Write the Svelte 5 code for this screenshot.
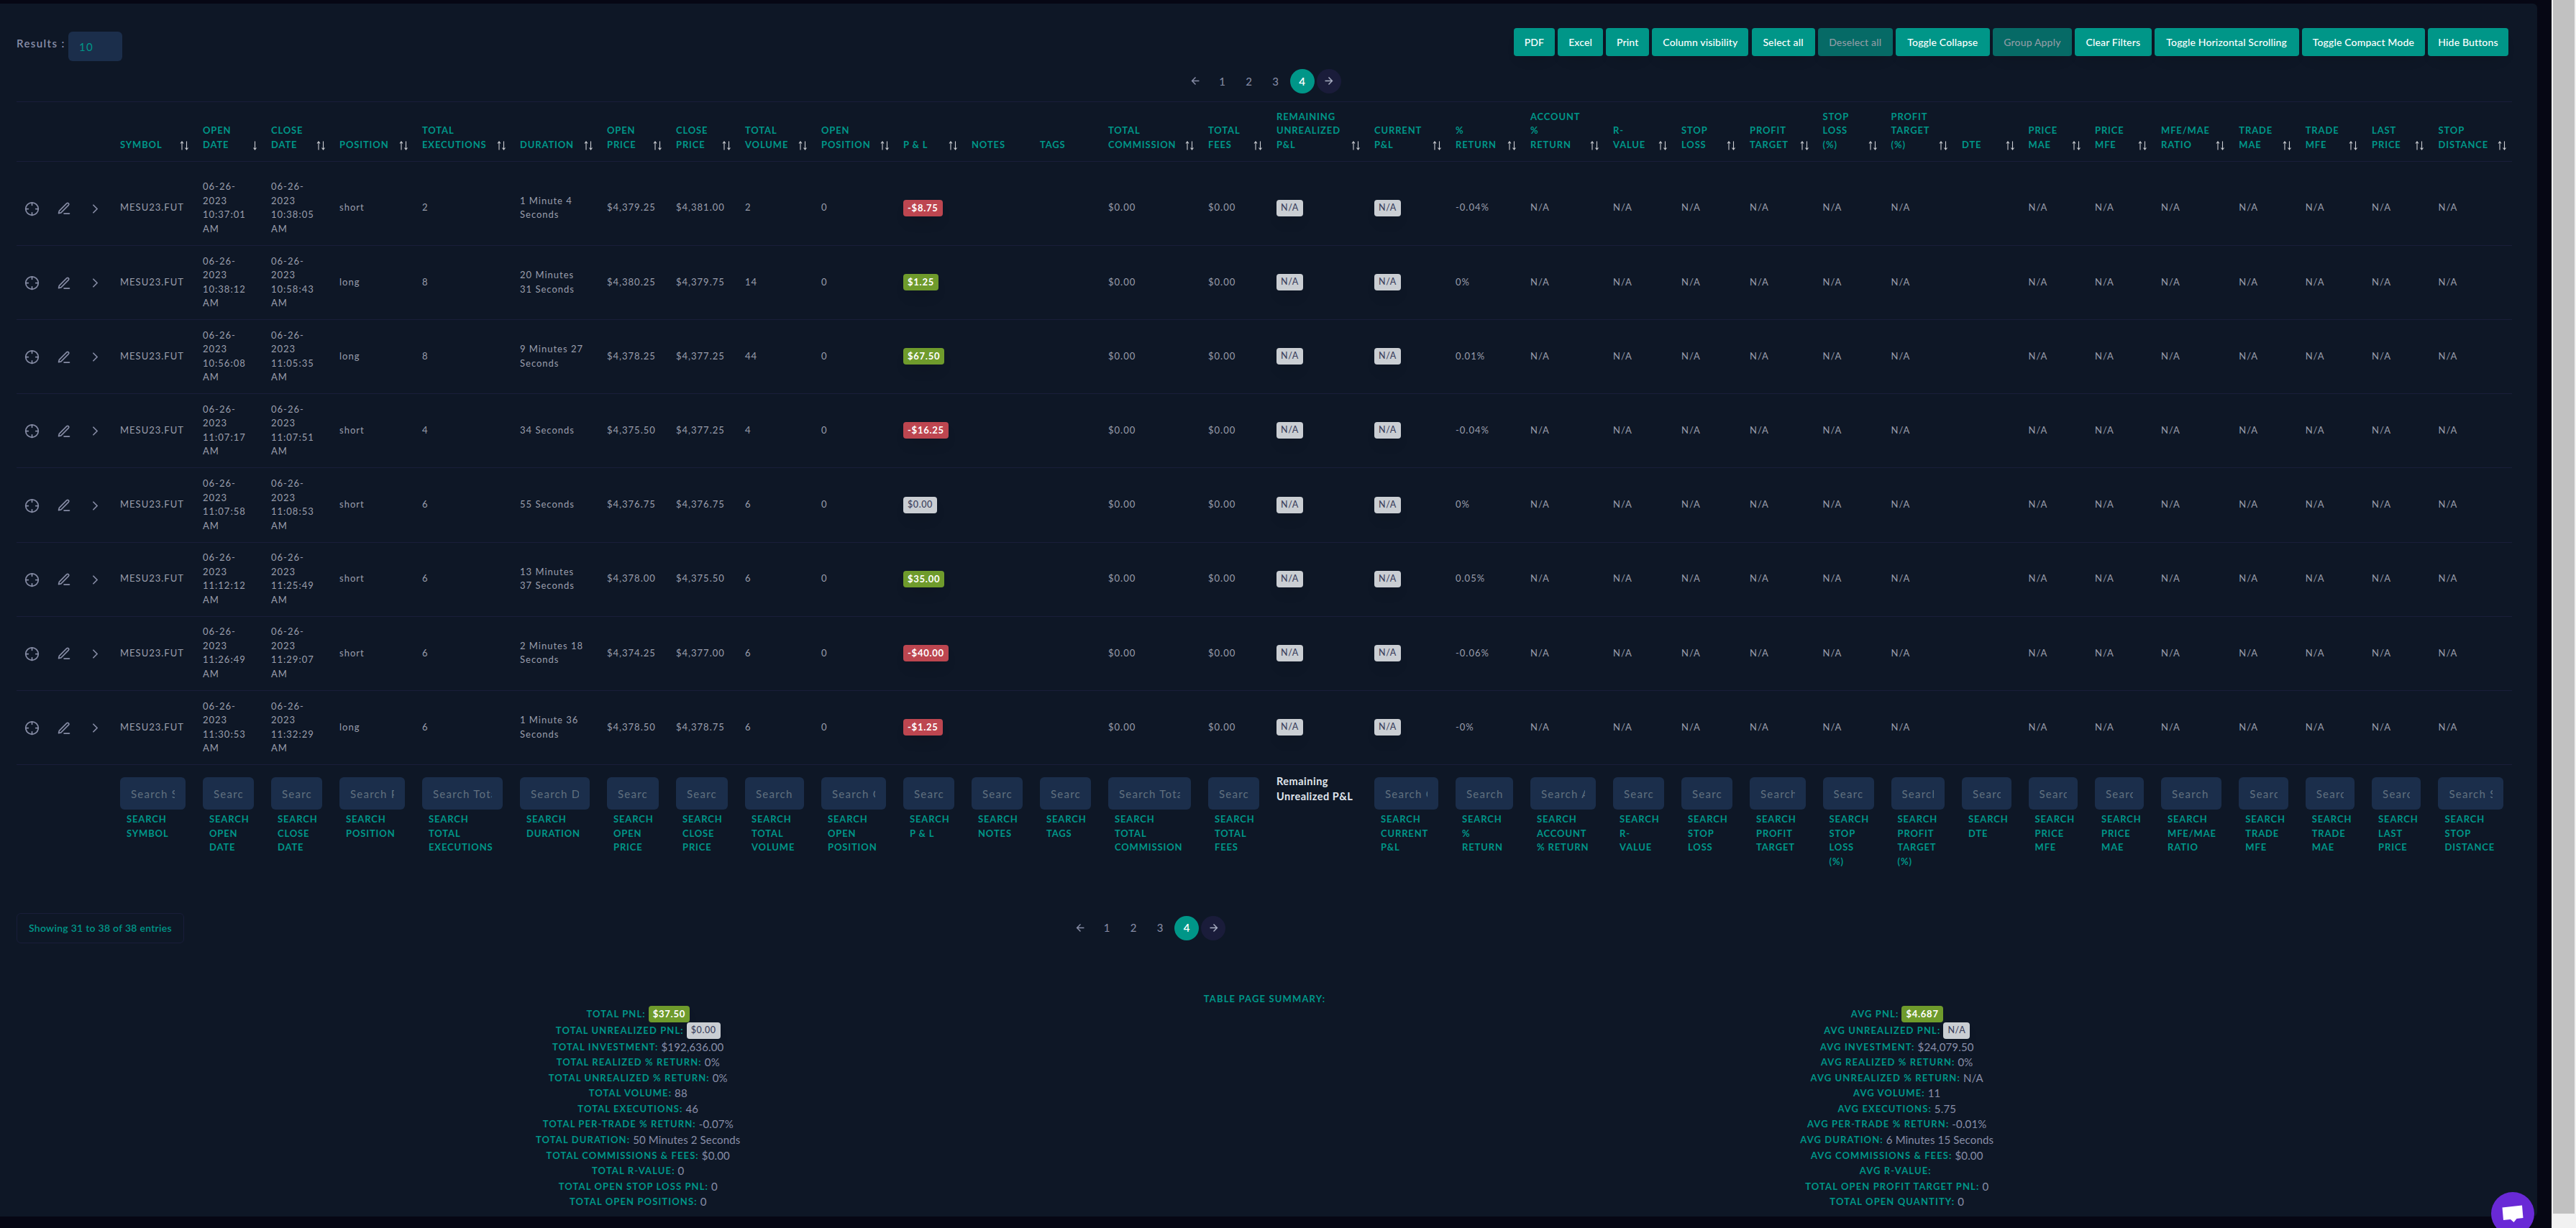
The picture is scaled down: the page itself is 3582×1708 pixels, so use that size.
<script lang="ts">
  type Column = {
    title: string;
    width: number;
    sort?: 'both' | 'asc';
    placeholder?: string;
    search?: string;
  };

  type Trade = {
    open: string;
    close: string;
    position: string;
    executions: number;
    duration: string;
    openPrice: string;
    closePrice: string;
    volume: number;
    pnl: string;
    ret: string;
  };

  const buttons = [
    { label: 'PDF', width: 57 },
    { label: 'Excel', width: 63 },
    { label: 'Print', width: 60 },
    { label: 'Column visibility', width: 134 },
    { label: 'Select all', width: 88 },
    { label: 'Deselect all', width: 104, disabled: true },
    { label: 'Toggle Collapse', width: 131 },
    { label: 'Group Apply', width: 110, disabled: true },
    { label: 'Clear Filters', width: 106.5 },
    { label: 'Toggle Horizontal Scrolling', width: 201 },
    { label: 'Toggle Compact Mode', width: 171 },
    { label: 'Hide Buttons', width: 112 },
  ];

  const columns: Column[] = [
    { title: 'Symbol', width: 115, sort: 'both', placeholder: 'Search Symbol', search: 'Search\nSymbol' },
    { title: 'Open\nDate', width: 95, sort: 'asc', placeholder: 'Search Open Date', search: 'Search\nOpen\nDate' },
    { title: 'Close\nDate', width: 95, sort: 'both', placeholder: 'Search Close Date', search: 'Search\nClose\nDate' },
    { title: 'Position', width: 115, sort: 'both', placeholder: 'Search Position', search: 'Search\nPosition' },
    { title: 'Total\nExecutions', width: 136, sort: 'both', placeholder: 'Search Total Executions', search: 'Search\nTotal\nExecutions' },
    { title: 'Duration', width: 121, sort: 'both', placeholder: 'Search Duration', search: 'Search\nDuration' },
    { title: 'Open\nPrice', width: 96, sort: 'both', placeholder: 'Search Open Price', search: 'Search\nOpen\nPrice' },
    { title: 'Close\nPrice', width: 96, sort: 'both', placeholder: 'Search Close Price', search: 'Search\nClose\nPrice' },
    { title: 'Total\nVolume', width: 106, sort: 'both', placeholder: 'Search Total Volume', search: 'Search\nTotal\nVolume' },
    { title: 'Open\nPosition', width: 114, sort: 'both', placeholder: 'Search Open Position', search: 'Search\nOpen\nPosition' },
    { title: 'P & L', width: 95, sort: 'both', placeholder: 'Search P & L', search: 'Search\nP & L' },
    { title: 'Notes', width: 95, placeholder: 'Search Notes', search: 'Search\nNotes' },
    { title: 'Tags', width: 95, placeholder: 'Search Tags', search: 'Search\nTags' },
    { title: 'Total\nCommission', width: 139, sort: 'both', placeholder: 'Search Total Commission', search: 'Search\nTotal\nCommission' },
    { title: 'Total\nFees', width: 95, sort: 'both', placeholder: 'Search Total Fees', search: 'Search\nTotal\nFees' },
    { title: 'Remaining\nUnrealized\nP&L', width: 136, sort: 'both' },
    { title: 'Current\nP&L', width: 113, sort: 'both', placeholder: 'Search Current P&L', search: 'Search\nCurrent\nP&L' },
    { title: '%\nReturn', width: 104, sort: 'both', placeholder: 'Search % Return', search: 'Search\n%\nReturn' },
    { title: 'Account\n%\nReturn', width: 115, sort: 'both', placeholder: 'Search Account % Return', search: 'Search\nAccount\n% Return' },
    { title: 'R-\nValue', width: 95, sort: 'both', placeholder: 'Search R-Value', search: 'Search\nR-\nValue' },
    { title: 'Stop\nLoss', width: 95, sort: 'both', placeholder: 'Search Stop Loss', search: 'Search\nStop\nLoss' },
    { title: 'Profit\nTarget', width: 101.5, sort: 'both', placeholder: 'Search Profit Target', search: 'Search\nProfit\nTarget' },
    { title: 'Stop\nLoss\n(%)', width: 95, sort: 'both', placeholder: 'Search Stop Loss (%)', search: 'Search\nStop\nLoss\n(%)' },
    { title: 'Profit\nTarget\n(%)', width: 98.5, sort: 'both', placeholder: 'Search Profit Target (%)', search: 'Search\nProfit\nTarget\n(%)' },
    { title: 'DTE', width: 92.5, sort: 'both', placeholder: 'Search DTE', search: 'Search\nDTE' },
    { title: 'Price\nMAE', width: 92.5, sort: 'both', placeholder: 'Search Price MFE', search: 'Search\nPrice\nMFE' },
    { title: 'Price\nMFE', width: 92, sort: 'both', placeholder: 'Search Price MAE', search: 'Search\nPrice\nMAE' },
    { title: 'MFE/MAE\nRatio', width: 108.3, sort: 'both', placeholder: 'Search MFE/MAE Ratio', search: 'Search\nMFE/MAE\nRatio' },
    { title: 'Trade\nMAE', width: 92.4, sort: 'both', placeholder: 'Search Trade MFE', search: 'Search\nTrade\nMFE' },
    { title: 'Trade\nMFE', width: 92.4, sort: 'both', placeholder: 'Search Trade MAE', search: 'Search\nTrade\nMAE' },
    { title: 'Last\nPrice', width: 92.4, sort: 'both', placeholder: 'Search Last Price', search: 'Search\nLast\nPrice' },
    { title: 'Stop\nDistance', width: 114.5, sort: 'both', placeholder: 'Search Stop Distance', search: 'Search\nStop\nDistance' },
  ];

  const trades: Trade[] = [
    { open: '10:37:01', close: '10:38:05', position: 'short', executions: 2, duration: '1 Minute 4\nSeconds', openPrice: '$4,379.25', closePrice: '$4,381.00', volume: 2, pnl: '-$8.75', ret: '-0.04%' },
    { open: '10:38:12', close: '10:58:43', position: 'long', executions: 8, duration: '20 Minutes\n31 Seconds', openPrice: '$4,380.25', closePrice: '$4,379.75', volume: 14, pnl: '$1.25', ret: '0%' },
    { open: '10:56:08', close: '11:05:35', position: 'long', executions: 8, duration: '9 Minutes 27\nSeconds', openPrice: '$4,378.25', closePrice: '$4,377.25', volume: 44, pnl: '$67.50', ret: '0.01%' },
    { open: '11:07:17', close: '11:07:51', position: 'short', executions: 4, duration: '34 Seconds', openPrice: '$4,375.50', closePrice: '$4,377.25', volume: 4, pnl: '-$16.25', ret: '-0.04%' },
    { open: '11:07:58', close: '11:08:53', position: 'short', executions: 6, duration: '55 Seconds', openPrice: '$4,376.75', closePrice: '$4,376.75', volume: 6, pnl: '$0.00', ret: '0%' },
    { open: '11:12:12', close: '11:25:49', position: 'short', executions: 6, duration: '13 Minutes\n37 Seconds', openPrice: '$4,378.00', closePrice: '$4,375.50', volume: 6, pnl: '$35.00', ret: '0.05%' },
    { open: '11:26:49', close: '11:29:07', position: 'short', executions: 6, duration: '2 Minutes 18\nSeconds', openPrice: '$4,374.25', closePrice: '$4,377.00', volume: 6, pnl: '-$40.00', ret: '-0.06%' },
    { open: '11:30:53', close: '11:32:29', position: 'long', executions: 6, duration: '1 Minute 36\nSeconds', openPrice: '$4,378.50', closePrice: '$4,378.75', volume: 6, pnl: '-$1.25', ret: '-0%' },
  ];

  // columns that follow "% Return"; null is the empty DTE cell
  const trailing = ['N/A', 'N/A', 'N/A', 'N/A', 'N/A', 'N/A', null, 'N/A', 'N/A', 'N/A', 'N/A', 'N/A', 'N/A', 'N/A'];

  const totals = [
    ['Total PnL:', '$37.50', 'up'],
    ['Total Unrealized PnL:', '$0.00', 'flat'],
    ['Total Investment:', '$192,636.00'],
    ['Total Realized % Return:', '0%'],
    ['Total Unrealized % Return:', '0%'],
    ['Total Volume:', '88'],
    ['Total Executions:', '46'],
    ['Total Per-Trade % Return:', '-0.07%'],
    ['Total Duration:', '50 Minutes 2 Seconds'],
    ['Total Commissions & Fees:', '$0.00'],
    ['Total R-Value:', '0'],
    ['Total Open Stop Loss PnL:', '0'],
    ['Total Open Positions:', '0'],
  ];

  const averages = [
    ['Avg PnL:', '$4.687', 'up'],
    ['Avg Unrealized PnL:', 'N/A', 'flat'],
    ['Avg Investment:', '$24,079.50'],
    ['Avg Realized % Return:', '0%'],
    ['Avg Unrealized % Return:', 'N/A'],
    ['Avg Volume:', '11'],
    ['Avg Executions:', '5.75'],
    ['Avg Per-Trade % Return:', '-0.01%'],
    ['Avg Duration:', '6 Minutes 15 Seconds'],
    ['Avg Commissions & Fees:', '$0.00'],
    ['Avg R-Value:', ''],
    ['Total Open Profit Target PnL:', '0'],
    ['Total Open Quantity:', '0'],
  ];

  let page = $state(4);
  let pageSize = $state('10');

  function tone(pnl: string) {
    if (pnl.startsWith('-')) return 'down';
    return pnl === '$0.00' ? 'flat' : 'up';
  }
</script>

{#snippet pager()}
  <nav class="pager">
    <button class="page" aria-label="Previous" onclick={() => (page = Math.max(1, page - 1))}>
      <svg viewBox="0 0 24 24" width="17" height="17"><path d="M19 12H5M12 19l-7-7 7-7" /></svg>
    </button>
    {#each [1, 2, 3, 4] as n}
      <button class="page" class:active={page === n} onclick={() => (page = n)}>{n}</button>
    {/each}
    <button class="page next" aria-label="Next" onclick={() => (page = Math.min(4, page + 1))}>
      <svg viewBox="0 0 24 24" width="17" height="17"><path d="M5 12h14M12 5l7 7-7 7" /></svg>
    </button>
  </nav>
{/snippet}

{#snippet summary(items: string[][])}
  <div class="summary-col">
    {#each items as [label, value, kind]}
      <div class="line" class:tall={kind}>
        <span class="label">{label}</span>
        {#if kind}
          <span class="badge {kind}">{value}</span>
        {:else}
          <span class="value">{value}</span>
        {/if}
      </div>
    {/each}
  </div>
{/snippet}

<div class="screen">
  <main class="panel">
    <header class="toolbar">
      <label class="results">
        <span>Results :</span>
        <input bind:value={pageSize} />
      </label>
      <div class="buttons">
        {#each buttons as b}
          <button class="btn" disabled={b.disabled} style="width: {b.width}px">{b.label}</button>
        {/each}
      </div>
    </header>

    <div class="top-pager">{@render pager()}</div>

    <table>
      <colgroup>
        <col class="ctl" /><col class="ctl" /><col class="ctl" />
        {#each columns as c}
          <col style="width: {c.width}px" />
        {/each}
      </colgroup>
      <thead>
        <tr>
          <th></th><th></th><th></th>
          {#each columns as c}
            <th>
              <div class="head">
                <span>{c.title}</span>
                {#if c.sort}
                  <svg class="sort" viewBox="0 0 13 13" width="13" height="13">
                    {#if c.sort === 'both'}
                      <path d="M3 12.5V1M1 3.5 3 1l2 2.500" />
                    {/if}
                    <path d="M9.500 .5V12M7.500 9.500l2 2.500 2-2.500" />
                  </svg>
                {/if}
              </div>
            </th>
          {/each}
        </tr>
      </thead>
      <tbody>
        {#each trades as t}
          <tr>
            <td class="icon">
              <svg viewBox="0 0 24 24" width="21" height="21">
                <circle cx="12" cy="12" r="10" />
                <path d="M22 12h-4M6 12H2M12 6V2M12 22v-4" />
              </svg>
            </td>
            <td class="icon">
              <svg viewBox="0 0 24 24" width="20" height="20">
                <path d="M12 20.500h9M16.500 3.500a2.120 2.120 0 0 1 3 3L7 19l-4 1 1-4z" />
              </svg>
            </td>
            <td class="icon">
              <svg viewBox="0 0 24 24" width="21" height="21"><path d="M9 18l6-6-6-6" /></svg>
            </td>
            <td>MESU23.FUT</td>
            <td>{`06-26-\n2023\n${t.open}\nAM`}</td>
            <td>{`06-26-\n2023\n${t.close}\nAM`}</td>
            <td>{t.position}</td>
            <td>{t.executions}</td>
            <td>{t.duration}</td>
            <td>{t.openPrice}</td>
            <td>{t.closePrice}</td>
            <td>{t.volume}</td>
            <td>0</td>
            <td><span class="badge {tone(t.pnl)}">{t.pnl}</span></td>
            <td></td>
            <td></td>
            <td>$0.00</td>
            <td>$0.00</td>
            <td><span class="badge flat">N/A</span></td>
            <td><span class="badge flat">N/A</span></td>
            <td>{t.ret}</td>
            {#each trailing as cell}
              <td>{cell ?? ''}</td>
            {/each}
          </tr>
        {/each}
      </tbody>
      <tfoot>
        <tr>
          <td></td><td></td><td></td>
          {#each columns as c}
            <td>
              {#if c.search}
                <input class="search" placeholder={c.placeholder} />
                <div class="search-label">{c.search}</div>
              {:else}
                <div class="plain">{'Remaining\nUnrealized P&L'}</div>
              {/if}
            </td>
          {/each}
        </tr>
      </tfoot>
    </table>

    <footer class="bottom">
      <div class="info">Showing 31 to 38 of 38 entries</div>
      {@render pager()}
    </footer>

    <h6 class="summary-title">Table Page Summary:</h6>
    <section class="summary">
      {@render summary(totals)}
      {@render summary(averages)}
    </section>
  </main>

  <div class="scrollbar"><div class="thumb"></div></div>

  <button class="chat" aria-label="Open chat">
    <svg viewBox="0 0 30 25" width="30" height="25"><path d="M.500 3.500 28 .5 29.500 18 20.500 19 16.500 24 12 20 2 21z" /></svg>
  </button>
</div>

<style>
  :global(body) {
    margin: 0;
    background: #060818;
    overflow: hidden;
  }

  .screen {
    position: relative;
    display: flex;
    justify-content: space-between;
    width: 3582px;
    height: 1708px;
    overflow: hidden;
    background: #060714;
    color: #888ea8;
    font-family: Lato, 'Open Sans', sans-serif;
    font-size: 13px;
  }

  .screen * {
    box-sizing: border-box;
  }

  button,
  input {
    font-family: inherit;
    border: 0;
    outline: 0;
  }

  .panel {
    width: 3528px;
    height: 1687px;
    margin-top: 5px;
    padding-left: 23px;
    background: #0e1726;
    border-radius: 0 6px 6px 0;
  }

  .toolbar {
    display: flex;
    justify-content: space-between;
    width: 3465px;
    height: 91px;
    padding-top: 34px;
  }

  .results {
    display: flex;
    gap: 5px;
    padding-top: 5px;
    font-size: 15px;
    font-weight: 600;
    letter-spacing: 1.4px;
    line-height: 32px;
  }

  .results span {
    width: 67px;
    white-space: nowrap;
  }

  .results input {
    width: 75px;
    height: 41px;
    padding: 0 15px;
    background: #1b2e4b;
    border-radius: 6px;
    color: #009688;
    font-size: 15px;
    letter-spacing: 1.2px;
  }

  .buttons {
    display: flex;
    gap: 4.15px;
  }

  .btn {
    height: 39px;
    padding: 0 0 1px;
    background: #009688;
    border-radius: 4px;
    box-shadow: 0 10px 20px -10px rgba(0, 0, 0, 0.2);
    color: #fff;
    font-size: 14px;
    font-weight: 500;
    letter-spacing: 0.15px;
    white-space: nowrap;
  }

  .btn:disabled {
    background: #066a66;
    color: #8f9ba4;
  }

  .top-pager {
    display: flex;
    padding-left: 1622.5px;
    height: 45px;
  }

  .pager {
    display: flex;
    gap: 3px;
    height: 34px;
  }

  .page {
    display: flex;
    align-items: center;
    justify-content: center;
    width: 34px;
    height: 34px;
    padding: 0 0 1px;
    background: none;
    border-radius: 50%;
    color: #888ea8;
    font-size: 15px;
  }

  .page svg {
    fill: none;
    stroke: currentColor;
    stroke-width: 2;
  }

  .page.active {
    background: #009688;
    color: #fff;
    font-weight: 600;
  }

  .page.next {
    background: #1a1c3a;
    color: #a9aec2;
  }

  table {
    width: 3470px;
    table-layout: fixed;
    border-collapse: collapse;
    border-top: 1px solid #191e3a;
  }

  .ctl {
    width: 44px;
  }

  th,
  td {
    padding: 0 12px;
    border-bottom: 1px solid #191e3a;
    letter-spacing: 1px;
    line-height: 19.5px;
    text-align: left;
    white-space: pre;
  }

  thead th {
    height: 83px;
    padding-bottom: 13px;
    vertical-align: bottom;
    color: #009688;
    font-weight: 700;
    text-transform: uppercase;
    letter-spacing: 0.85px;
  }

  .head {
    display: flex;
    align-items: flex-end;
    justify-content: space-between;
    margin-right: -5px;
  }

  .sort {
    flex: none;
    margin: 0 0 2px -20px;
    fill: none;
    stroke: #c9cbd0;
    stroke-width: 1.1;
  }

  tbody td {
    height: 103.17px;
    padding-bottom: 1px;
    color: #9a9eac;
  }

  tbody tr:first-child td {
    height: 117px;
    padding-top: 13px;
  }

  tbody td.icon {
    padding-left: 0;
    padding-right: 1px;
    padding-bottom: 0;
    text-align: center;
  }

  .icon svg {
    display: block;
    margin: 1px auto 0;
    fill: none;
    stroke: #868ca5;
    stroke-width: 2;
    stroke-linecap: round;
    stroke-linejoin: round;
  }

  .badge {
    display: inline-block;
    height: 23px;
    padding: 0 6px;
    border-radius: 4px;
    box-shadow: 0 10px 20px -8px rgba(0, 0, 0, 0.3);
    font-size: 13px;
    font-weight: 700;
    letter-spacing: 0.75px;
    line-height: 22px;
    vertical-align: middle;
  }

  .badge.up {
    background: #6f9b2c;
    color: #fff;
  }

  .badge.down {
    background: #bd4650;
    color: #fff;
  }

  .badge.flat {
    background: #caced3;
    color: #3b3f5c;
    font-size: 12.5px;
    font-weight: 500;
    letter-spacing: 0.6px;
  }

  tfoot td {
    height: 178px;
    padding-top: 17px;
    vertical-align: top;
    border: 0;
    white-space: normal;
  }

  .search {
    display: block;
    width: 100%;
    height: 45px;
    padding: 0 15px;
    background: #1b2e4b;
    border-radius: 6px;
    font-size: 15px;
    letter-spacing: 1.25px;
  }

  .search::placeholder {
    color: #60707f;
    opacity: 1;
  }

  .search-label {
    margin: 4px 0 0 9px;
    color: #009688;
    font-weight: 700;
    letter-spacing: 0.85px;
    text-transform: uppercase;
    white-space: pre;
  }

  .plain {
    color: #e0e6ed;
    font-size: 14.5px;
    font-weight: 700;
    letter-spacing: 0.5px;
    line-height: 20.5px;
    margin-top: -4px;
    white-space: pre;
  }

  .bottom {
    display: flex;
    align-items: center;
    height: 42px;
    margin-top: 28px;
  }

  .info {
    width: 233px;
    height: 42px;
    margin-right: 1229px;
    padding-left: 16px;
    border: 1px solid #191e3a;
    border-radius: 6px;
    color: #009688;
    font-size: 14px;
    font-weight: 600;
    letter-spacing: 0.27px;
    line-height: 39px;
    white-space: nowrap;
  }

  .summary-title {
    width: 3471px;
    margin: 67px 0 0;
    color: #009688;
    font-size: 13px;
    font-weight: 700;
    letter-spacing: 1.15px;
    line-height: 20px;
    text-align: center;
    text-transform: uppercase;
  }

  .summary {
    display: grid;
    grid-template-columns: 1750.5px 1750.5px;
    margin-left: -11px;
  }

  .line {
    display: flex;
    align-items: center;
    justify-content: center;
    gap: 4px;
    height: 21.55px;
    white-space: nowrap;
  }

  .line.tall {
    height: 23.2px;
  }

  .label {
    color: #009688;
    font-weight: 700;
    letter-spacing: 1.1px;
    text-transform: uppercase;
  }

  .value {
    font-size: 15px;
    letter-spacing: 0.15px;
  }

  .scrollbar {
    width: 34px;
    height: 1708px;
    padding: 0 2px;
    background: #f1f1f1;
  }

  .thumb {
    height: 1688px;
    background: #c1c1c1;
  }

  .chat {
    position: absolute;
    left: 3464px;
    top: 1658px;
    width: 60px;
    height: 60px;
    padding: 0 0 0 15px;
    background: #6929d6;
    border-radius: 50%;
  }

  .chat svg {
    display: block;
    margin-top: 1px;
    fill: #fff;
  }
</style>
